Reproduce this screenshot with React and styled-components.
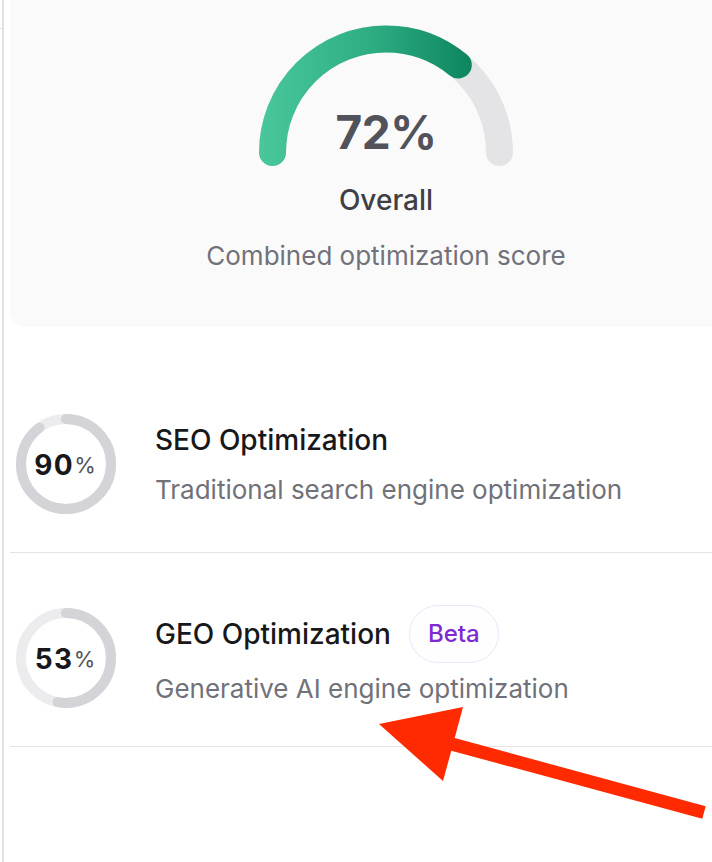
import React from "react";
import styled, { createGlobalStyle } from "styled-components";

const Global = createGlobalStyle`
  html, body { margin: 0; padding: 0; background: #ffffff; }
  body {
    font-family: Inter, "Noto Sans", "Liberation Sans", sans-serif;
    overflow: hidden;
    width: 712px;
    height: 862px;
    -webkit-font-smoothing: antialiased;
  }
`;

const Shell = styled.div`
  position: relative;
  display: flex;
  width: 712px;
  height: 862px;
  overflow: hidden;
  &::before {
    content: "";
    position: absolute;
    left: 0;
    top: 28px;
    width: 3px;
    height: 1px;
    background: #e2e2e2;
  }
`;

const Rail = styled.div`
  flex: 0 0 auto;
  width: 2px;
  margin-left: 2px;
  background: #e2e2e4;
`;

const Main = styled.main`
  flex: 0 0 752px;
  width: 752px;
  margin-left: 6px;
  display: flex;
  flex-direction: column;
`;

const Card = styled.section`
  margin-top: -20px;
  padding: 30px 0 54px;
  background: #fafafa;
  border-radius: 16px;
  display: flex;
  flex-direction: column;
  align-items: center;
`;

const GaugeWrap = styled.div`
  position: relative;
  width: 284px;
  height: 160px;
`;

const GaugeValue = styled.div`
  position: absolute;
  left: 0;
  right: 0;
  top: 99px;
  text-align: center;
  font-size: 46px;
  line-height: 46px;
  font-weight: 700;
  color: #52525b;
  letter-spacing: -0.5px;
`;

const CardTitle = styled.div`
  margin-top: 12px;
  font-size: 28px;
  line-height: 36px;
  font-weight: 500;
  color: #3f3f46;
`;

const CardSub = styled.div`
  margin-top: 21px;
  font-size: 26px;
  line-height: 34px;
  color: #71717a;
`;

const List = styled.div`
  margin-top: 32px;
  display: flex;
  flex-direction: column;
`;

const Row = styled.div`
  display: flex;
  align-items: center;
  gap: 39px;
  padding: 55px 0 38px 6px;
  border-bottom: 1px solid #e4e4e7;
`;

const RingWrap = styled.div`
  position: relative;
  flex: 0 0 100px;
  width: 100px;
  height: 100px;
`;

const RingLabel = styled.div`
  position: absolute;
  inset: 0;
  display: flex;
  align-items: center;
  justify-content: center;
  padding-top: 1px;
  padding-right: 2px;
`;

const RingNum = styled.span`
  font-size: 28px;
  font-weight: 700;
  letter-spacing: 1.5px;
  color: #18181b;
`;

const RingPct = styled.span`
  font-size: 22px;
  font-weight: 400;
  color: #52525b;
`;

const Info = styled.div`
  display: flex;
  flex-direction: column;
  gap: 15px;
`;

const TitleLine = styled.div`
  display: flex;
  align-items: center;
  gap: 18px;
`;

const Title = styled.div`
  font-size: 28px;
  line-height: 36px;
  font-weight: 500;
  color: #18181b;
`;

const Sub = styled.div`
  font-size: 26px;
  line-height: 34px;
  color: #71717a;
`;

const Badge = styled.span`
  margin: -5.5px 0;
  box-sizing: border-box;
  height: 58px;
  padding: 0 18px;
  display: inline-flex;
  align-items: center;
  border: 1.5px solid #ede6fb;
  border-radius: 999px;
  background: #fefdff;
  font-size: 24px;
  font-weight: 500;
  color: #7e2ad3;
`;

const Overlay = styled.svg`
  position: absolute;
  left: 0;
  top: 0;
  pointer-events: none;
`;

function Gauge({ value }) {
  const d = "M 28.5 142.5 A 113.5 113.5 0 0 1 255.5 142.5";
  return (
    <GaugeWrap>
      <svg width="284" height="160" viewBox="0 0 284 160">
        <defs>
          <linearGradient id="gg" gradientUnits="userSpaceOnUse" x1="15" y1="0" x2="232" y2="0">
            <stop offset="0" stopColor="#4ac89c" />
            <stop offset="0.5" stopColor="#2fae84" />
            <stop offset="1" stopColor="#0c845e" />
          </linearGradient>
        </defs>
        <path d={d} fill="none" stroke="#e4e4e7" strokeWidth="27" strokeLinecap="round" />
        <path
          d={d}
          fill="none"
          stroke="url(#gg)"
          strokeWidth="27"
          strokeLinecap="round"
          pathLength="100"
          strokeDasharray={`${value} 200`}
        />
      </svg>
      <GaugeValue>{value}%</GaugeValue>
    </GaugeWrap>
  );
}

function Ring({ value }) {
  const r = 45;
  return (
    <RingWrap>
      <svg width="100" height="100" viewBox="0 0 100 100">
        <circle cx="50" cy="50" r={r} fill="none" stroke="#ececef" strokeWidth="10" />
        <circle
          cx="50"
          cy="50"
          r={r}
          fill="none"
          stroke="#d4d4d8"
          strokeWidth="10"
          strokeLinecap="round"
          pathLength="100"
          strokeDasharray={`${value} 200`}
          transform="rotate(-90 50 50)"
        />
      </svg>
      <RingLabel>
        <RingNum>{value}</RingNum>
        <RingPct>%</RingPct>
      </RingLabel>
    </RingWrap>
  );
}

const rows = [
  { value: 90, title: "SEO Optimization", sub: "Traditional search engine optimization" },
  { value: 53, title: "GEO Optimization", sub: "Generative AI engine optimization", badge: "Beta" },
];

export default function App() {
  return (
    <>
      <Global />
      <Shell>
        <Rail />
        <Main>
          <Card>
            <Gauge value={72} />
            <CardTitle>Overall</CardTitle>
            <CardSub>Combined optimization score</CardSub>
          </Card>
          <List>
            {rows.map((r) => (
              <Row key={r.title}>
                <Ring value={r.value} />
                <Info>
                  <TitleLine>
                    <Title>{r.title}</Title>
                    {r.badge && <Badge>{r.badge}</Badge>}
                  </TitleLine>
                  <Sub>{r.sub}</Sub>
                </Info>
              </Row>
            ))}
          </List>
        </Main>
        <Overlay width="712" height="862" viewBox="0 0 712 862">
          <polygon
            points="379,724 463,707 454.7,738.1 705.7,806.2 702.3,818.8 451.3,750.7 443,781"
            fill="#ff2a00"
          />
        </Overlay>
      </Shell>
    </>
  );
}
